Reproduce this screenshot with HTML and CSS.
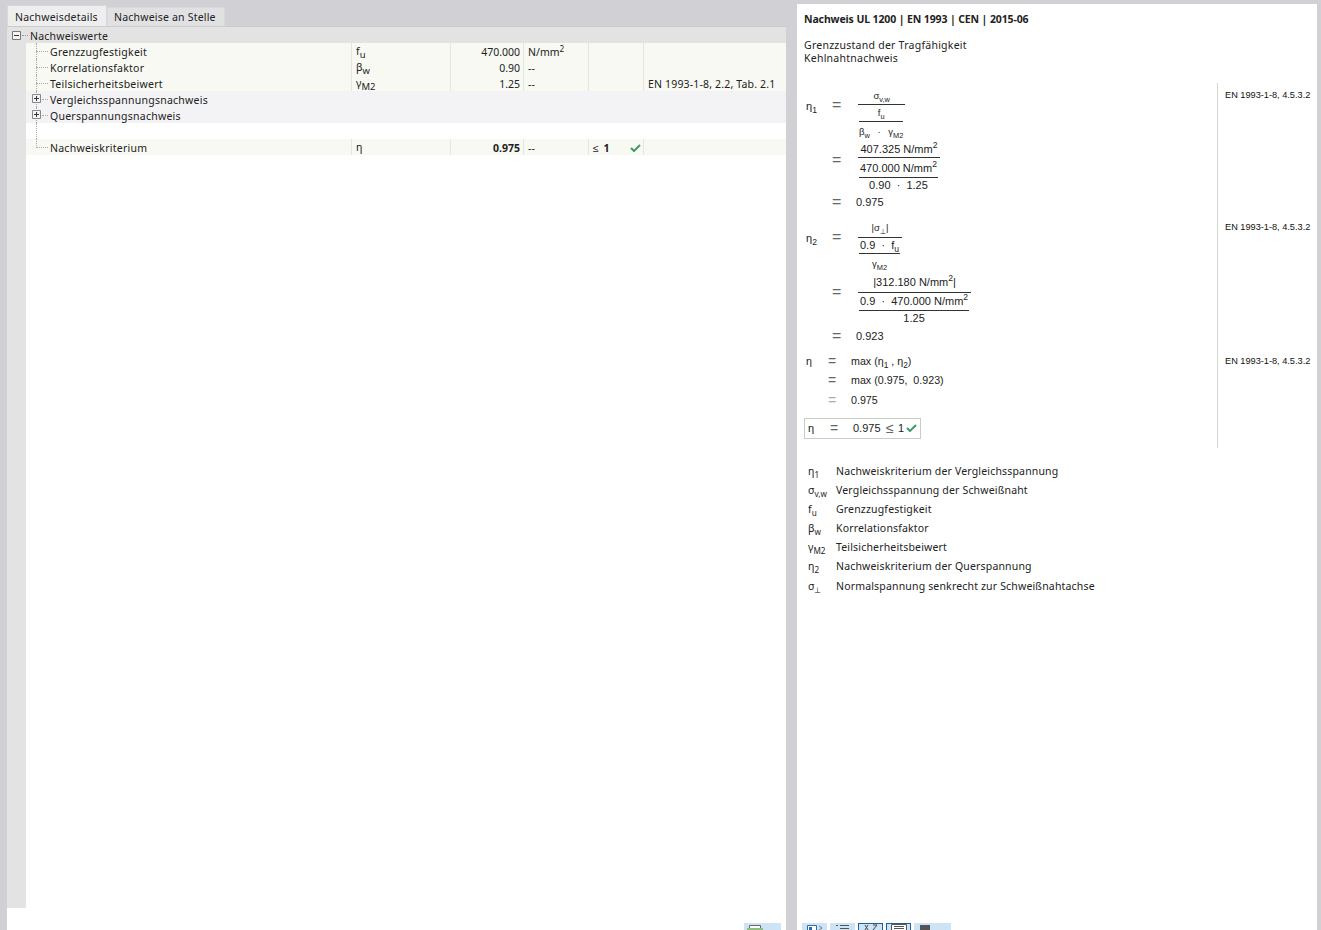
FILE: index.html
```html
<!DOCTYPE html>
<html lang="de">
<head>
<meta charset="utf-8">
<title>Nachweisdetails</title>
<link rel="stylesheet" href="styles.css">
</head>
<body>
<section class="left">
  <nav class="tabs">
    <div class="tab active">Nachweisdetails</div>
    <div class="tab">Nachweise an Stelle</div>
  </nav>
  <div class="tree">
    <div class="head"><svg class="exp" width="9" height="9" viewBox="0 0 9 9"><path d="M.5.5h8v8h-8z" fill="#f4f4f4" stroke="#777"/><path d="M2 4.500h5" stroke="#333"/></svg><i class="hdash"></i><span class="htext">Nachweiswerte</span></div>
    <div class="body">
      <div class="gutter"></div>
      <div class="rows">
        <div class="row data"><div class="lab leaf">Grenzzugfestigkeit</div><div class="sym">f<sub>u</sub></div><div class="val">470.000</div><div class="unit">N/mm<sup>2</sup></div><div class="crit"></div><div class="ref"></div></div>
        <div class="row data"><div class="lab leaf">Korrelationsfaktor</div><div class="sym">β<sub>w</sub></div><div class="val">0.90</div><div class="unit">--</div><div class="crit"></div><div class="ref"></div></div>
        <div class="row data"><div class="lab leaf">Teilsicherheitsbeiwert</div><div class="sym">γ<sub>M2</sub></div><div class="val">1.25</div><div class="unit">--</div><div class="crit"></div><div class="ref">EN 1993-1-8, 2.2, Tab. 2.1</div></div>
        <div class="row group"><div class="lab node"><svg class="exp2" width="9" height="9" viewBox="0 0 9 9"><path d="M.5.5h8v8h-8z" fill="#f4f4f4" stroke="#888"/><path d="M2 4.500h5M4.500 2v5" stroke="#333"/></svg>Vergleichsspannungsnachweis</div></div>
        <div class="row group"><div class="lab node"><svg class="exp2" width="9" height="9" viewBox="0 0 9 9"><path d="M.5.5h8v8h-8z" fill="#f4f4f4" stroke="#888"/><path d="M2 4.500h5M4.500 2v5" stroke="#333"/></svg>Querspannungsnachweis</div></div>
        <div class="row blank"><div class="lab line"></div></div>
        <div class="row data"><div class="lab leaf last">Nachweiskriterium</div><div class="sym">η</div><div class="val strong">0.975</div><div class="unit">--</div><div class="crit"><span>≤ <b>1</b></span><svg class="tick" width="11" height="8" viewBox="0 0 11 8"><path d="M1 4l3 3 6-6" fill="none" stroke="#3f9a6b" stroke-width="2"/></svg></div><div class="ref"></div></div>
      </div>
    </div>
    <div class="foot">
      <div class="btn wide"><svg width="20" height="7" viewBox="0 0 20 7"><path d="M3.500 2.500h11v5h-11z" fill="#fff" stroke="#666"/><path d="M1 5h16v2H1z" fill="#8fbf7f"/></svg></div>
    </div>
  </div>
</section>

<section class="right">
  <div class="title">Nachweis UL 1200 | EN 1993 | CEN | 2015-06</div>
  <div class="subs">Grenzzustand der Tragfähigkeit<br>Kehlnahtnachweis</div>

  <div class="calc">
    <div class="eqs">
      <div class="eq e1">
        <div class="line l1"><span class="s">η<sub>1</sub></span><span class="q">=</span>
          <div class="frac"><div class="num small h16">σ<sub>v,w</sub></div><div class="frac in"><div class="num small h17">f<sub>u</sub></div><div class="small h19 wider">β<sub>w</sub> &nbsp;·&nbsp; γ<sub>M2</sub></div></div></div>
        </div>
        <div class="line l2"><span class="s"></span><span class="q">=</span>
          <div class="frac"><div class="num h17">407.325 N/mm<sup>2</sup></div><div class="frac in"><div class="num h20">470.000 N/mm<sup>2</sup></div><div class="h15">0.90 &nbsp;·&nbsp; 1.25</div></div></div>
        </div>
        <div class="line res"><span class="s"></span><span class="q">=</span><span class="v">0.975</span></div>
      </div>
      <div class="eq e2">
        <div class="line l3"><span class="s">η<sub>2</sub></span><span class="q">=</span>
          <div class="frac"><div class="num small h18">|σ<sub>⊥</sub>|</div><div class="frac in"><div class="num h16">0.9 &nbsp;·&nbsp; f<sub>u</sub></div><div class="small h20">γ<sub>M2</sub></div></div></div>
        </div>
        <div class="line l4"><span class="s"></span><span class="q">=</span>
          <div class="frac"><div class="num h19b">|312.180 N/mm<sup>2</sup>|</div><div class="frac in"><div class="num h18">0.9 &nbsp;·&nbsp; 470.000 N/mm<sup>2</sup></div><div class="h16">1.25</div></div></div>
        </div>
        <div class="line res"><span class="s"></span><span class="q">=</span><span class="v">0.923</span></div>
      </div>
      <div class="eq e3">
        <div class="line3"><span class="s3">η</span><span class="q3">=</span><span>max (η<sub>1</sub> , η<sub>2</sub>)</span></div>
        <div class="line3"><span class="s3"></span><span class="q3">=</span><span>max (0.975, &nbsp;0.923)</span></div>
        <div class="line3"><span class="s3"></span><span class="q3 pale">=</span><span>0.975</span></div>
      </div>
      <div class="box"><span class="bs">η</span><span class="bq">=</span><span class="bv">0.975</span><span class="ble">≤</span><span>1</span><svg class="tick2" width="11" height="8" viewBox="0 0 11 8"><path d="M1 4l3 3 6-6" fill="none" stroke="#3f9a6b" stroke-width="2"/></svg></div>
    </div>
    <div class="refs">
      <div class="r r1">EN 1993-1-8, 4.5.3.2</div>
      <div class="r r2">EN 1993-1-8, 4.5.3.2</div>
      <div class="r r3">EN 1993-1-8, 4.5.3.2</div>
    </div>
  </div>

  <div class="legend">
    <div class="lg"><span class="ls">η<sub>1</sub></span><span>Nachweiskriterium der Vergleichsspannung</span></div>
    <div class="lg"><span class="ls">σ<sub>v,w</sub></span><span>Vergleichsspannung der Schweißnaht</span></div>
    <div class="lg"><span class="ls">f<sub>u</sub></span><span>Grenzzugfestigkeit</span></div>
    <div class="lg"><span class="ls">β<sub>w</sub></span><span>Korrelationsfaktor</span></div>
    <div class="lg"><span class="ls">γ<sub>M2</sub></span><span>Teilsicherheitsbeiwert</span></div>
    <div class="lg"><span class="ls">η<sub>2</sub></span><span>Nachweiskriterium der Querspannung</span></div>
    <div class="lg"><span class="ls">σ<sub>⊥</sub></span><span>Normalspannung senkrecht zur Schweißnahtachse</span></div>
  </div>

  <div class="tools">
    <div class="btn t1"><svg width="20" height="7" viewBox="0 0 20 7"><path d="M2.500 2.500h9v5h-9z" fill="#fff" stroke="#2b6cb0"/><path d="M4 4h3v3H4z" fill="#2b6cb0"/><path d="M14 3l3 2-3 2" fill="none" stroke="#777"/></svg></div>
    <div class="btn t1"><svg width="20" height="7" viewBox="0 0 20 7"><path d="M3 2.500h2M7 2.500h9M7 5.500h9" stroke="#555"/></svg></div>
    <div class="btn t1 on"><svg width="20" height="7" viewBox="0 0 20 7"><path d="M4 2l3 5M7 2L4 7M12 2h4l-4 5" fill="none" stroke="#444"/></svg></div>
    <div class="btn t1 on"><svg width="20" height="7" viewBox="0 0 20 7"><path d="M2.500 1.500h15v7h-15z" fill="#fff" stroke="#555"/><path d="M5 3.500h10M5 5.500h10" stroke="#555"/></svg></div>
    <div class="btn t2"><svg width="12" height="7" viewBox="0 0 12 7"><path d="M1 2h10v5H1z" fill="#555"/></svg></div>
  </div>
</section>
</body>
</html>
```
FILE: styles.css
```css
* { box-sizing: border-box; }
html, body { margin: 0; height: 930px; overflow: hidden; }
body {
  display: flex;
  background: #d1d1d5;
  font-family: "Noto Sans", sans-serif;
  font-size: 10.500px;
  color: #222;
}
sub, sup { font-size: 0.78em; line-height: 0; }

.left { width: 779px; margin-left: 7px; display: flex; flex-direction: column; }
.tabs { display: flex; height: 26px; align-items: flex-end; }
.tab { height: 19px; width: 118px; padding: 2px 0 0 6px; line-height: 14px; background: #e1e1e4; border: 1px solid #d8d8dc; border-bottom: 0; white-space: nowrap; letter-spacing: .2px; }
.tab.active { width: 100px; height: 21px; padding: 4px 0 0 7px; background: #eeeeef; }
.tree { flex: 1; background: #fff; display: flex; flex-direction: column; border-top: 1px solid #ccc; min-height: 0; }
.head { height: 16px; flex: none; background: #e3e3e3; display: flex; align-items: center; padding-left: 5px; }
.htext { letter-spacing: .2px; padding-top: 1px; }
.exp { flex: none; }
.hdash { width: 6px; border-top: 1px dotted #999; margin: 0 2px 0 1px; }
.body { display: flex; height: 865px; flex: none; }
.gutter { width: 19px; background: #e3e3e3; }
.rows { flex: 1; }
.row { height: 16px; display: grid; grid-template-columns: 325px 99px 73px 65px 55px 1fr; line-height: 18px; }
.row > div { white-space: nowrap; height: 16px; }
.data { background: #f8f9f3; }
.group { background: #f3f3f5; }
.blank { background: #fff; }
.lab { position: relative; padding-left: 24px; letter-spacing: .25px; }
.lab::before { content: ""; position: absolute; left: 10px; top: 8px; width: 12px; border-top: 1px dotted #aaa; }
.lab::after { content: ""; position: absolute; left: 10px; top: 0; height: 16px; border-left: 1px dotted #aaa; }
.lab.last::after { height: 9px; }
.line::before { display: none; }
.node::before { left: 16px; width: 6px; }
.exp2 { position: absolute; left: 6px; top: 3px; z-index: 1; }
.sym, .val, .unit, .crit, .ref { border-left: 1px solid #e6e6de; }
.sym { padding-left: 4px; line-height: 17px; }
.sym sub { font-size: .9em; }
.val { text-align: right; padding-right: 3px; }
.val.strong { font-weight: 700; }
.unit { padding-left: 4px; }
.crit { padding: 1px 2px 0 4px; display: flex; justify-content: space-between; align-items: center; }
.crit b { margin-left: 2px; }
.ref { padding-left: 4px; letter-spacing: .17px; }
.foot { flex: 1; display: flex; justify-content: flex-end; align-items: flex-start; padding: 15px 5px 0 0; }
.btn { height: 7px; background: #cde4f7; display: flex; justify-content: center; overflow: hidden; }
.wide { width: 37px; justify-content: flex-start; padding-left: 2px; }

.right { width: 520px; margin: 4px 0 0 11px; background: #fff; display: flex; flex-direction: column; padding-left: 7px; position: relative; }
.title { font-weight: 700; margin-top: 7px; line-height: 16px; letter-spacing: -.12px; }
.subs { margin-top: 12px; line-height: 13px; letter-spacing: .25px; }
.calc { display: flex; margin-top: 18px; height: 365px; font-family: "Liberation Sans", sans-serif; font-size: 11px; }
.eqs { width: 413px; }
.refs { flex: 1; border-left: 1px solid #d5d5d5; padding-left: 7px; font-size: 9.200px; color: #111; }
.r { height: 132px; padding-top: 7px; }
.r3 { height: auto; padding-top: 9px; }
.line { display: flex; align-items: flex-start; padding-left: 2px; }
.s { width: 26px; line-height: 16px; }
.q { width: 26px; color: #666; font-size: 16px; line-height: 16px; }
.l1 .s { margin-top: 9px; } .l1 .q { margin-top: 8px; }
.l2 .q { margin-top: 11px; }
.l3 .s { margin-top: 10px; } .l3 .q { margin-top: 9px; }
.l4 .q { margin-top: 10px; }
.res { height: 18px; align-items: center; }
.res .q { margin-top: 0; }
.v { margin-left: -2px; }
.frac { display: flex; flex-direction: column; align-items: stretch; text-align: center; white-space: nowrap; }
.frac.in { margin: 0 2px 0 1px; }
.num { padding: 0 1px; border-bottom: 1px solid #333; }
.h15 { height: 15px; line-height: 14px; }
.h16 { height: 16px; line-height: 14px; }
.h17 { height: 17px; line-height: 16px; }
.h18 { height: 18px; line-height: 16px; }
.h19 { height: 19px; line-height: 20px; }
.h19b { height: 19px; line-height: 16px; }
.h20 { height: 20px; line-height: 20px; }
.small { font-size: 9.500px; }
.wider { word-spacing: 1.200px; }
.e1 { height: 128px; padding-top: 6px; }
.e2 { height: 134px; padding-top: 9px; }
.e3 { height: 65px; padding-top: 6px; font-size: 10.700px; }
.line3 { display: flex; align-items: center; height: 19.500px; padding-left: 2px; }
.s3 { width: 22px; }
.q3 { width: 23px; color: #666; font-size: 14px; }
.pale { color: #aaa; }
.box { margin-top: 8px; width: 117px; height: 21px; border: 1px solid #c4d0c4; display: flex; align-items: center; padding: 0 0 2px 3px; }
.bs { width: 22px; }
.bq { width: 23px; font-size: 14px; color: #666; }
.bv { width: 33px; }
.ble { font-size: 14px; color: #666; width: 12px; }
.tick2 { margin-left: 2px; }
.legend { margin-top: 14px; padding-left: 4px; }
.lg { display: flex; height: 19px; line-height: 19px; letter-spacing: .17px; }
.lg:last-child { margin-top: 1px; }
.ls { width: 28px; letter-spacing: 0; }
.tools { position: absolute; left: 5px; bottom: 0; display: flex; gap: 3px; }
.t1 { width: 25px; }
.t1.on { box-shadow: inset 0 0 0 1px #1d5f99; height: 8px; margin-bottom: -1px; }
.t2 { width: 37px; justify-content: flex-start; padding-left: 5px; }
```
